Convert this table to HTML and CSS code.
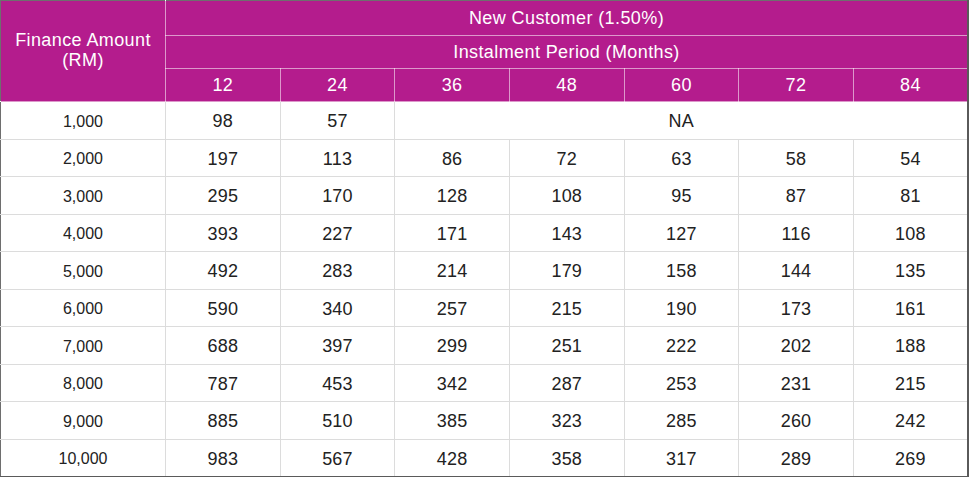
FILE: index.html
```html
<!DOCTYPE html>
<html>
<head>
<meta charset="utf-8">
<link rel="stylesheet" href="styles.css">
</head>
<body>
<table class="rates">
  <colgroup>
    <col class="col-amount">
    <col><col><col><col><col><col><col>
  </colgroup>
  <thead>
    <tr class="h1">
      <th rowspan="3" class="amount-head">Finance Amount<br>(RM)</th>
      <th colspan="7">New Customer (1.50%)</th>
    </tr>
    <tr class="h2">
      <th colspan="7">Instalment Period (Months)</th>
    </tr>
    <tr class="h3">
      <th>12</th><th>24</th><th>36</th><th>48</th><th>60</th><th>72</th><th>84</th>
    </tr>
  </thead>
  <tbody>
    <tr><td class="amt">1,000</td><td>98</td><td>57</td><td colspan="5">NA</td></tr>
    <tr><td class="amt">2,000</td><td>197</td><td>113</td><td>86</td><td>72</td><td>63</td><td>58</td><td>54</td></tr>
    <tr><td class="amt">3,000</td><td>295</td><td>170</td><td>128</td><td>108</td><td>95</td><td>87</td><td>81</td></tr>
    <tr><td class="amt">4,000</td><td>393</td><td>227</td><td>171</td><td>143</td><td>127</td><td>116</td><td>108</td></tr>
    <tr><td class="amt">5,000</td><td>492</td><td>283</td><td>214</td><td>179</td><td>158</td><td>144</td><td>135</td></tr>
    <tr><td class="amt">6,000</td><td>590</td><td>340</td><td>257</td><td>215</td><td>190</td><td>173</td><td>161</td></tr>
    <tr><td class="amt">7,000</td><td>688</td><td>397</td><td>299</td><td>251</td><td>222</td><td>202</td><td>188</td></tr>
    <tr><td class="amt">8,000</td><td>787</td><td>453</td><td>342</td><td>287</td><td>253</td><td>231</td><td>215</td></tr>
    <tr><td class="amt">9,000</td><td>885</td><td>510</td><td>385</td><td>323</td><td>285</td><td>260</td><td>242</td></tr>
    <tr><td class="amt">10,000</td><td>983</td><td>567</td><td>428</td><td>358</td><td>317</td><td>289</td><td>269</td></tr>
  </tbody>
</table>
</body>
</html>
```

FILE: styles.css
```css
html, body {
  margin: 0;
  padding: 0;
  background: #ffffff;
}

.rates {
  width: 969px;
  table-layout: fixed;
  border-collapse: collapse;
  border-top: 1px solid #6e6e6e;
  border-left: 1px solid #6e6e6e;
  border-right: 2px solid #5a5a5a;
  border-bottom: 2px solid #5a5a5a;
  font-family: "Liberation Sans", Arial, sans-serif;
  font-size: 18px;
  color: #222222;
}

.col-amount {
  width: 165px;
}

.rates th {
  background: #b41c8d;
  color: #ffffff;
  font-weight: normal;
  letter-spacing: 0.4px;
  border: 1px solid rgba(255, 255, 255, 0.55);
  padding: 0;
  text-align: center;
  vertical-align: middle;
}

.rates .h1 th {
  height: 34px;
  border-top: 0;
}

.rates .h2 th,
.rates .h3 th {
  height: 32px;
}

.rates th.amount-head {
  line-height: 20px;
  border-left: 0;
  padding-bottom: 2px;
}

.rates td {
  border: 1px solid #dcdcdc;
  height: 36.5px;
  padding: 3px 0 0;
  box-sizing: border-box;
  text-align: center;
  vertical-align: middle;
  letter-spacing: 0.2px;
}

.rates tbody tr {
  height: 37.5px;
}

.rates td.amt {
  font-size: 16px;
  letter-spacing: 0;
  border-left: 0;
}
```
